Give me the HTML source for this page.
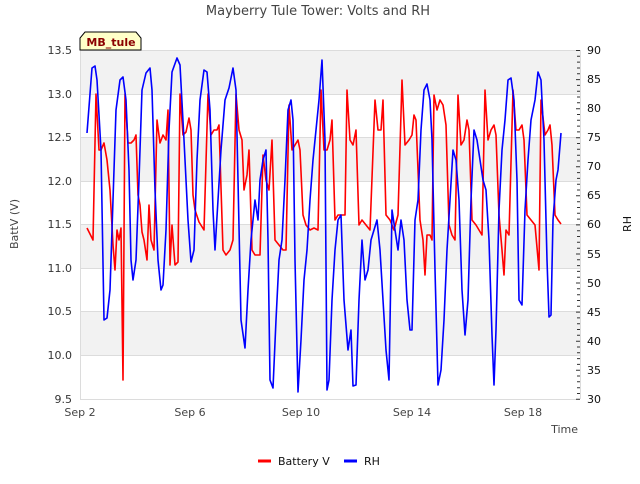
<!DOCTYPE html>
<html><head><meta charset="utf-8"><style>
body{margin:0;background:#fff;font-family:"DejaVu Sans","Liberation Sans",sans-serif;}
</style></head><body>
<svg width="640" height="480" xmlns="http://www.w3.org/2000/svg" font-family="DejaVu Sans, Liberation Sans, sans-serif">
<rect width="640" height="480" fill="#fff"/>
<g fill="#f2f2f2">
<rect x="80" y="50" width="500" height="44"/>
<rect x="80" y="137" width="500" height="44"/>
<rect x="80" y="224" width="500" height="44"/>
<rect x="80" y="311" width="500" height="44"/>
</g>
<g stroke="#dcdcdc" stroke-width="1">
<line x1="80" y1="50.5" x2="580" y2="50.5"/><line x1="80" y1="94.5" x2="580" y2="94.5"/>
<line x1="80" y1="137.5" x2="580" y2="137.5"/><line x1="80" y1="181.5" x2="580" y2="181.5"/>
<line x1="80" y1="224.5" x2="580" y2="224.5"/><line x1="80" y1="268.5" x2="580" y2="268.5"/>
<line x1="80" y1="311.5" x2="580" y2="311.5"/><line x1="80" y1="355.5" x2="580" y2="355.5"/>
<line x1="80" y1="399.5" x2="580" y2="399.5"/>
<line x1="80.5" y1="50" x2="80.5" y2="399"/><line x1="580.5" y1="50" x2="580.5" y2="399"/>
</g>
<g font-size="11" fill="#333" text-anchor="end">
<text x="72" y="54">13.5</text><text x="72" y="98">13.0</text><text x="72" y="141">12.5</text>
<text x="72" y="185">12.0</text><text x="72" y="228">11.5</text><text x="72" y="272">11.0</text>
<text x="72" y="315">10.5</text><text x="72" y="359">10.0</text><text x="72" y="403">9.5</text>
</g>
<g font-size="11" fill="#111" text-anchor="start">
<text x="587" y="54">90</text><text x="587" y="83">85</text><text x="587" y="112">80</text>
<text x="587" y="141">75</text><text x="587" y="170">70</text><text x="587" y="199">65</text>
<text x="587" y="228">60</text><text x="587" y="258">55</text><text x="587" y="287">50</text>
<text x="587" y="316">45</text><text x="587" y="345">40</text><text x="587" y="374">35</text>
<text x="587" y="403">30</text>
</g>
<g font-size="11" fill="#444" text-anchor="middle">
<text x="80" y="416">Sep 2</text><text x="190" y="416">Sep 6</text><text x="301" y="416">Sep 10</text>
<text x="412" y="416">Sep 14</text><text x="523" y="416">Sep 18</text>
</g>
<text x="578" y="433" font-size="11" fill="#444" text-anchor="end">Time</text>
<text x="318" y="15" font-size="13" fill="#444" text-anchor="middle">Mayberry Tule Tower: Volts and RH</text>
<text transform="translate(18,224) rotate(-90)" font-size="11" fill="#444" text-anchor="middle">BattV (V)</text>
<text transform="translate(631,224) rotate(-90)" font-size="11" fill="#111" text-anchor="middle">RH</text>
<path d="M80,50 L80,38 L85,32 L136,32 L141,38 L141,50 Z" fill="#ffffc8" stroke="#000" stroke-width="1"/>
<text x="111" y="46" font-size="11" font-weight="bold" fill="#8b0000" text-anchor="middle">MB_tule</text>
<polyline fill="none" stroke="#f00" stroke-width="1.6" stroke-linejoin="round" points="87,228 93,240 96,94 99,150 101,150 104,143 107,160 110,190 113,245 115,270 117,230 119,240 121,228 123,380 125,94 128,143 131,143 134,140 136,135 138,195 140,205 142,232 144,240 147,260 149,205 151,240 154,250 157,120 160,143 163,135 166,140 168,110 170,265 172,225 175,265 178,262 180,94 183,135 186,132 189,118 191,130 193,195 195,210 199,222 204,230 208,94 211,135 214,130 217,130 219,125 223,250 226,255 230,250 233,240 236,94 239,130 242,140 244,190 247,175 249,150 252,250 255,255 258,255 260,255 263,155 266,180 269,190 272,140 275,240 279,245 283,250 286,250 289,105 292,150 295,145 298,140 300,150 303,215 306,225 310,230 314,228 318,230 321,90 324,150 327,150 330,140 332,120 335,220 338,215 342,215 345,215 347,90 350,140 353,145 356,130 359,225 362,220 366,225 370,230 375,100 378,130 381,130 383,100 386,215 390,220 394,230 398,215 402,80 405,145 409,140 412,135 414,115 416,120 420,220 423,240 425,275 427,235 430,235 432,240 434,95 437,110 440,100 443,105 446,125 449,225 452,235 455,240 458,95 461,145 464,140 467,120 469,130 472,220 476,225 479,230 482,235 485,90 488,140 491,130 494,125 496,135 499,215 502,250 504,275 506,230 509,235 513,90 516,130 519,130 522,125 524,140 527,215 531,220 535,225 539,270 541,100 545,135 548,130 550,125 552,145 555,215 558,220 561,224"/>
<polyline fill="none" stroke="#00f" stroke-width="1.6" stroke-linejoin="round" points="87,133 92,68 95,66 97,80 101,150 104,320 107,318 110,290 113,200 116,110 120,80 123,77 126,100 129,170 131,260 133,280 136,260 139,180 142,90 146,73 150,68 152,90 155,190 158,260 161,290 163,285 166,230 169,130 172,72 177,58 180,65 184,140 188,220 191,262 194,250 197,160 200,100 204,70 207,72 210,110 213,210 215,250 218,200 221,150 225,100 229,88 233,68 236,90 238,180 241,320 245,348 248,290 251,240 255,200 258,220 260,180 263,160 266,150 268,240 270,380 273,388 276,320 279,260 282,240 285,180 288,110 291,100 293,120 295,260 298,392 301,340 304,280 307,250 310,200 313,160 316,130 319,100 322,60 325,140 327,390 329,380 332,300 335,250 338,220 341,215 344,300 348,350 351,330 353,386 356,385 359,300 362,240 365,280 368,270 371,240 374,230 377,220 380,250 383,300 386,350 389,380 392,210 395,230 398,250 401,220 404,240 407,300 410,330 412,330 415,220 418,200 421,130 424,90 427,84 430,100 432,140 435,270 438,385 441,370 444,320 447,250 450,200 453,150 456,160 459,200 462,290 465,335 468,300 471,200 474,130 477,140 480,160 483,180 486,190 489,240 492,335 494,385 496,330 499,210 502,150 505,120 508,80 511,78 514,100 517,180 519,300 522,305 525,210 528,160 531,120 535,100 538,72 541,80 544,140 547,260 549,317 551,315 553,220 556,180 558,170 561,133"/>
<path stroke="#333" stroke-width="1" fill="none" d="M576,50.5h4M577,56.3h3M577,62.1h3M577,68h3M577,73.8h3M576,79.6h4M577,85.4h3M577,91.2h3M577,97h3M577,102.8h3M576,108.7h4M577,114.5h3M577,120.3h3M577,126.1h3M577,131.9h3M576,137.7h4M577,143.5h3M577,149.3h3M577,155.2h3M577,161h3M576,166.8h4M577,172.6h3M577,178.4h3M577,184.2h3M577,190h3M576,195.8h4M577,201.7h3M577,207.5h3M577,213.3h3M577,219.1h3M576,224.9h4M577,230.7h3M577,236.5h3M577,242.3h3M577,248.2h3M576,254h4M577,259.8h3M577,265.6h3M577,271.4h3M577,277.2h3M576,283h4M577,288.8h3M577,294.7h3M577,300.5h3M577,306.3h3M576,312.1h4M577,317.9h3M577,323.7h3M577,329.5h3M577,335.3h3M576,341.2h4M577,347h3M577,352.8h3M577,358.6h3M577,364.4h3M576,370.2h4M577,376h3M577,381.8h3M577,387.7h3M577,393.5h3M576,399.3h4"/>
<line x1="258" y1="461" x2="271" y2="461" stroke="#f00" stroke-width="3"/>
<text x="278" y="465" font-size="11" fill="#111">Battery V</text>
<line x1="344" y1="461" x2="357" y2="461" stroke="#00f" stroke-width="3"/>
<text x="364" y="465" font-size="11" fill="#111">RH</text>
</svg>
</body></html>
